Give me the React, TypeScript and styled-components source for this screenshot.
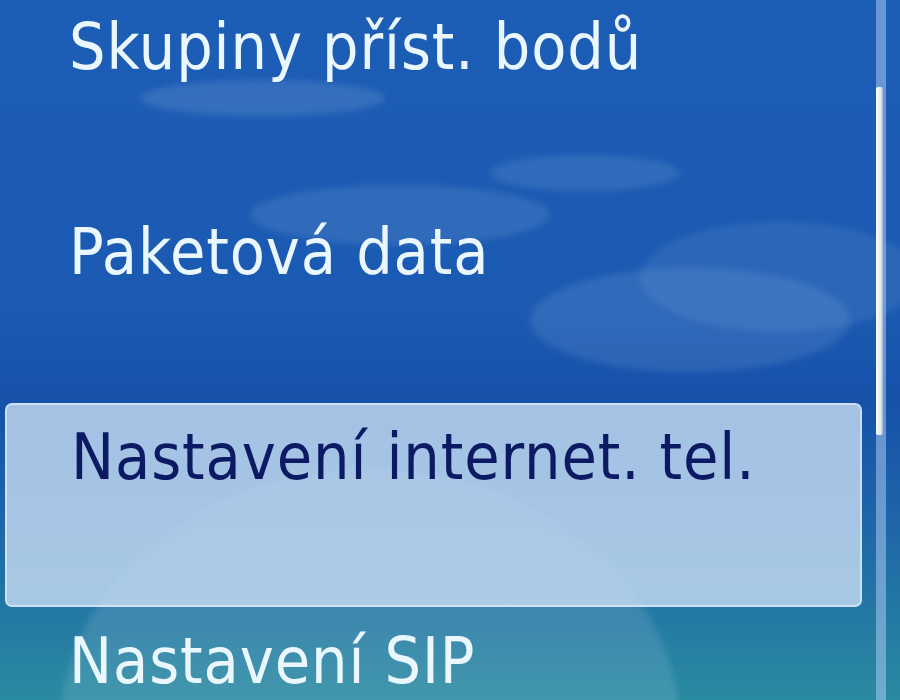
import React from 'react';
import styled, {createGlobalStyle} from "styled-components";

const GlobalStyle = createGlobalStyle`
  html, body {
    margin: 0;
    padding: 0;
    width: 900px;
    height: 700px;
    overflow: hidden;
  }
`

type Bubble = { x: number, y: number, w: number, h: number, o: number }

const bubbles: Array<Bubble> = [
    {x: 140, y: 80, w: 245, h: 36, o: 0.12},
    {x: 490, y: 155, w: 190, h: 36, o: 0.1},
    {x: 250, y: 185, w: 300, h: 60, o: 0.1},
    {x: 640, y: 222, w: 280, h: 110, o: 0.08},
    {x: 530, y: 268, w: 320, h: 104, o: 0.1},
    {x: 60, y: 470, w: 620, h: 520, o: 0.12},
]

const items = [
    'Skupiny příst. bodů',
    'Paketová data',
    'Nastavení internet. tel.',
    'Nastavení SIP',
]

const App = () => {
    return (
        <Screen>
            <GlobalStyle/>
            {bubbles.map((b, i) =>
                <BubbleShape key={i} style={{left: b.x, top: b.y, width: b.w, height: b.h, opacity: b.o}}/>
            )}
            <List>
                {items.map((label, i) =>
                    <Row key={label} selected={i === 2}>
                        <Label selected={i === 2}>{label}</Label>
                    </Row>
                )}
            </List>
            <ScrollTrack>
                <ScrollThumb/>
            </ScrollTrack>
        </Screen>
    );
};

export default App;

const Screen = styled.div`
  position: relative;
  width: 900px;
  height: 700px;
  overflow: hidden;
  display: flex;
  align-items: flex-start;
  background: linear-gradient(180deg, #1c5db5 0%, #1b5ab2 45%, #1651aa 57%, #1e66a8 75%, #2a8aa0 100%);
  font-family: "DejaVu Sans Condensed", "DejaVu Sans", sans-serif;
  font-stretch: condensed;
`

const BubbleShape = styled.div`
  position: absolute;
  border-radius: 50%;
  background: #e6f2ff;
  filter: blur(3px);
`

const List = styled.div`
  position: relative;
  flex: 1;
  display: flex;
  flex-direction: column;
  padding: 0 0 0 5px;
  margin-top: -7px;
`

const Row = styled.div<{ selected?: boolean }>`
  flex-shrink: 0;
  height: 205px;
  box-sizing: border-box;
  display: flex;
  align-items: flex-start;
  padding: 22px 0 0 64px;
  width: 857px;
  border-radius: 7px;
  ${p => p.selected && `
    height: 204px;
    background: rgba(196, 218, 242, 0.82);
    border: 2px solid rgba(220, 236, 252, 0.7);
    padding: 20px 0 0 64px;
  `}
`

const Label = styled.span<{ selected?: boolean }>`
  font-size: 64px;
  line-height: 1;
  white-space: nowrap;
  color: ${p => p.selected ? '#0c1a63' : '#eaf7ff'};
  letter-spacing: 0.9px;
`

const ScrollTrack = styled.div`
  position: relative;
  align-self: stretch;
  width: 10px;
  margin: 0 14px 0 0;
  background: rgba(170, 200, 240, 0.55);
`

const ScrollThumb = styled.div`
  position: absolute;
  left: 0;
  top: 87px;
  width: 7px;
  height: 348px;
  background: linear-gradient(90deg, #ffffff, #dde8f0 70%, #9ab4d0);
  border-radius: 2px;
`
